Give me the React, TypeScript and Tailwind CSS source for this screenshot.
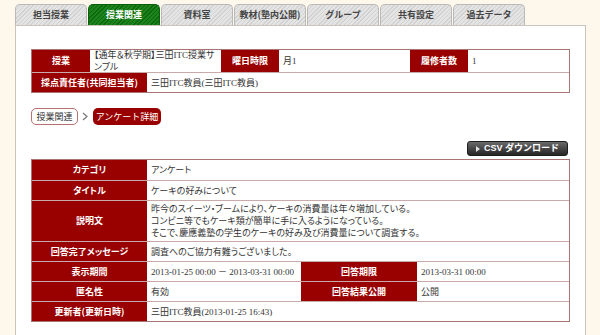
import React from "react";

const tabs = ["担当授業", "授業関連", "資料室", "教材(塾内公開)", "グループ", "共有設定", "過去データ"];

const valueFont = "[font-family:'Liberation_Serif','Noto_Sans_CJK_JP',serif] [font-feature-settings:'palt']";
const labelCls =
  "bg-[#990000] text-white font-bold text-[9px] flex items-center justify-center text-center [font-family:'Noto_Sans_CJK_JP',sans-serif] [font-feature-settings:'palt']";
const valueCls = `text-[#333] text-[9px] leading-[12px] px-[4px] flex items-center ${valueFont}`;

type Row = { label: string; value: React.ReactNode; h: string };

const detailRows: Row[] = [
  { label: "カテゴリ", value: "アンケート", h: "h-[20px]" },
  { label: "タイトル", value: "ケーキの好みについて", h: "h-[20px]" },
  {
    label: "説明文",
    value: (
      <div>
        <div>昨今のスイーツ・ブームにより、ケーキの消費量は年々増加している。</div>
        <div>コンビニ等でもケーキ類が簡単に手に入るようになっている。</div>
        <div>そこで、慶應義塾の学生のケーキの好み及び消費量について調査する。</div>
      </div>
    ),
    h: "h-[41px]",
  },
  { label: "回答完了メッセージ", value: "調査へのご協力有難うございました。", h: "h-[20px]" },
];

export default function App() {
  return (
    <div className="w-[600px] h-[335px] overflow-hidden bg-[#fdf7ec]">
      <div className="ml-[15px] w-[571px] pt-[4px]">
        <div className="flex gap-[1px] h-[21px]">
          {tabs.map((t, i) => (
            <div
              key={t}
              className={`w-[72px] h-[21px] rounded-t-[5px] border border-b-0 flex items-center justify-center text-[9px] font-bold [font-family:'Noto_Sans_CJK_JP',sans-serif] ${
                i === 1
                  ? "border-[#0b5e0b] text-white bg-[repeating-linear-gradient(135deg,#0c680c_0px,#0c680c_1px,#1c821c_1px,#1c821c_3px)]"
                  : "border-[#b9b9b9] text-[#444] bg-[repeating-linear-gradient(135deg,#d2d2d2_0px,#d2d2d2_1px,#e4e4e4_1px,#e4e4e4_3px)]"
              }`}
            >
              {t}
            </div>
          ))}
        </div>
        <div className="h-[320px] bg-white border border-b-0 border-[#c9c5bd] pl-[15px] pr-[14px] pt-[23px]">
          {/* course summary */}
          <div className="w-[539px] border border-[#a87474]">
            <div className="flex h-[22px]">
              <div className={`${labelCls} w-[58px]`}>授業</div>
              <div className={`${valueCls} w-[131px]`}>【通年＆秋学期】三田ITC授業サンプル</div>
              <div className={`${labelCls} w-[58px]`}>曜日時限</div>
              <div className={`${valueCls} w-[131px]`}>月1</div>
              <div className={`${labelCls} w-[58px]`}>履修者数</div>
              <div className={`${valueCls} flex-1`}>1</div>
            </div>
            <div className="flex h-[20px] border-t border-[#c9a9a9]">
              <div className={`${labelCls} w-[115px]`}>採点責任者(共同担当者)</div>
              <div className={`${valueCls} flex-1`}>三田ITC教員(三田ITC教員)</div>
            </div>
          </div>

          {/* breadcrumb */}
          <div className="flex items-center mt-[15px] h-[17px] text-[9px] [font-family:'Noto_Sans_CJK_JP',sans-serif]">
            <div className="h-[17px] w-[47px] border border-[#b87070] rounded-[5px] flex items-center justify-center text-[#333]">
              授業関連
            </div>
            <svg width="15" height="17" viewBox="0 0 15 17" className="shrink-0">
              <path d="M5 5l4 3.5L5 12" fill="none" stroke="#777" strokeWidth="1.2" />
            </svg>
            <div className="h-[17px] w-[68px] bg-[#990000] rounded-[5px] flex items-center justify-center text-white">
              アンケート詳細
            </div>
          </div>

          {/* csv */}
          <div className="flex justify-end mt-[16px] pr-[3px]">
            <div className="h-[15px] w-[101px] rounded-[3px] bg-gradient-to-b from-[#6a6a6a] to-[#262626] border border-[#1e1e1e] flex items-center justify-center gap-[4px] text-white text-[9px] font-bold [font-family:'Liberation_Sans','Noto_Sans_CJK_JP',sans-serif]">
              <svg width="4" height="6" viewBox="0 0 4 6">
                <path d="M0 0l4 3-4 3z" fill="#ddd" />
              </svg>
              CSV ダウンロード
            </div>
          </div>

          {/* questionnaire detail */}
          <div className="w-[539px] mt-[3px] border border-[#a87474]">
            {detailRows.map((r, i) => (
              <div key={r.label} className={`flex ${r.h} ${i > 0 ? "border-t border-[#c9a9a9]" : ""}`}>
                <div className={`${labelCls} w-[115px]`}>{r.label}</div>
                <div className={`${valueCls} flex-1`}>{r.value}</div>
              </div>
            ))}
            <div className="flex h-[20px] border-t border-[#c9a9a9]">
              <div className={`${labelCls} w-[115px]`}>表示期間</div>
              <div className={`${valueCls} w-[154px]`}>2013-01-25 00:00 － 2013-03-31 00:00</div>
              <div className={`${labelCls} w-[116px]`}>回答期限</div>
              <div className={`${valueCls} flex-1`}>2013-03-31 00:00</div>
            </div>
            <div className="flex h-[20px] border-t border-[#c9a9a9]">
              <div className={`${labelCls} w-[115px]`}>匿名性</div>
              <div className={`${valueCls} w-[154px]`}>有効</div>
              <div className={`${labelCls} w-[116px]`}>回答結果公開</div>
              <div className={`${valueCls} flex-1`}>公開</div>
            </div>
            <div className="flex h-[20px] border-t border-[#c9a9a9]">
              <div className={`${labelCls} w-[115px]`}>更新者(更新日時)</div>
              <div className={`${valueCls} flex-1`}>三田ITC教員(2013-01-25 16:43)</div>
            </div>
          </div>
        </div>
      </div>
    </div>
  );
}
